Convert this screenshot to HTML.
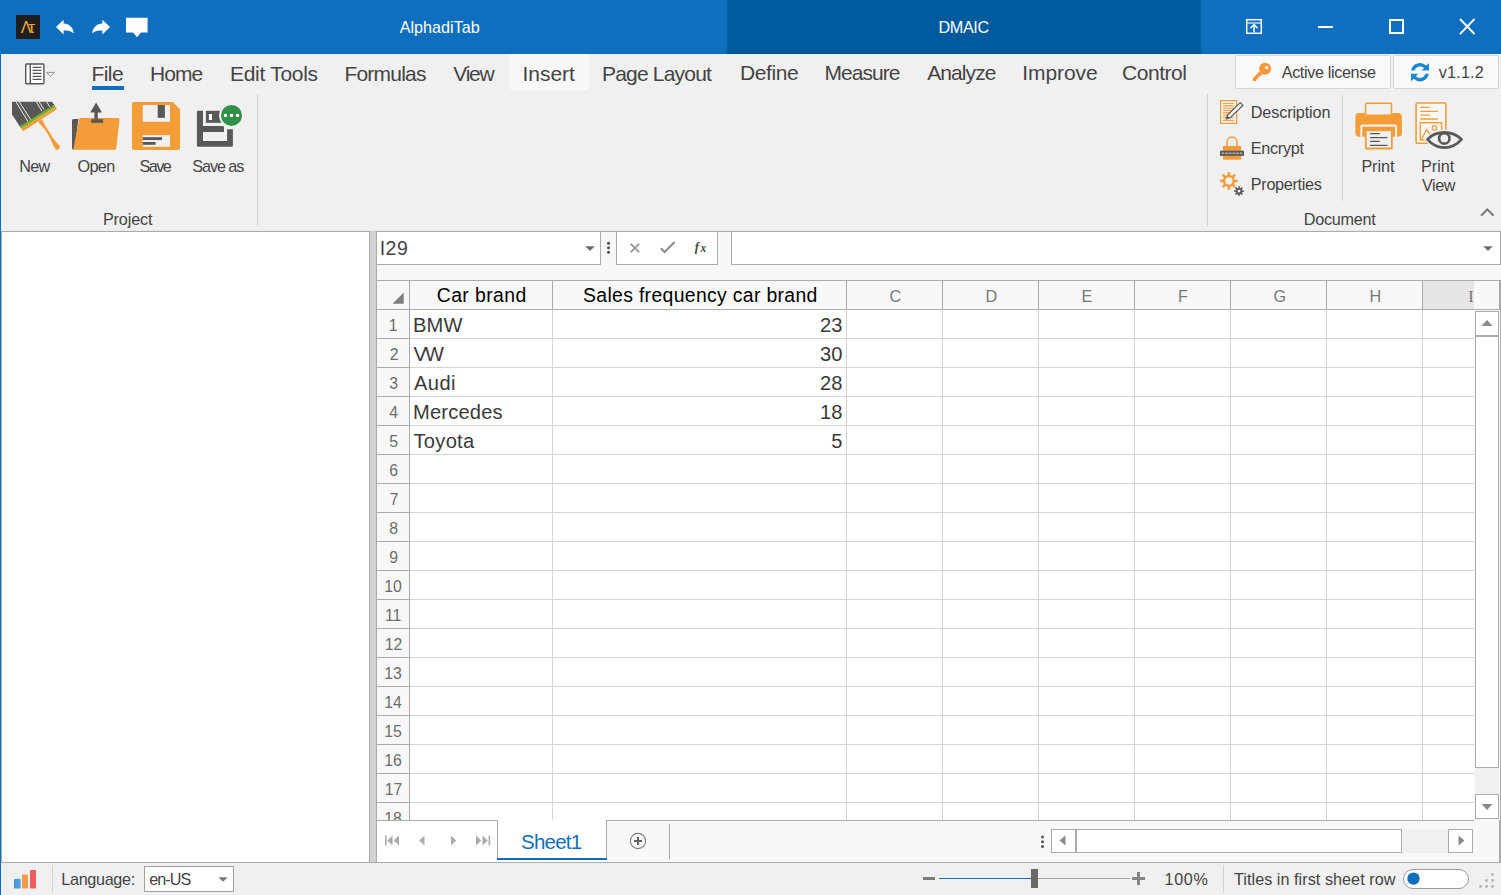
<!DOCTYPE html>
<html lang="en">
<head>
<meta charset="utf-8">
<title>AlphadiTab - DMAIC</title>
<style>
html,body{margin:0;padding:0;}
body{width:1501px;height:895px;overflow:hidden;position:relative;background:#f0f0f0;font-family:"Liberation Sans",sans-serif;}
.a{position:absolute;box-sizing:border-box;}
.t{position:absolute;white-space:pre;display:block;}
svg{position:absolute;overflow:visible;}
.box{position:absolute;box-sizing:border-box;background:#fff;border:1px solid #ababab;}
.hl{position:absolute;height:1px;background:#d4d4d4;}
.vl{position:absolute;width:1px;background:#d4d4d4;}
</style>
</head>
<body>
<!-- ===== title bar ===== -->
<div class="a" id="titlebar" style="left:0;top:0;width:1501px;height:54px;background:#106ebe;"></div>
<div class="a" id="titledark" style="left:727px;top:0;width:474px;height:54px;background:#005a9e;"></div>
<div class="a" id="winborder" style="left:0;top:54px;width:1px;height:841px;background:#106ebe;"></div>
<div class="a" style="left:16px;top:15px;width:24px;height:24px;background:#1e1e1e;"></div>
<svg style="left:56px;top:20px" width="18" height="15" viewBox="0 0 18 15"><path d="M0 7.1L7.6 -0.3V3.4C13 3.4 17 7 17.9 13.6C15.5 10.7 12 10.4 7.6 10.4V14.4Z" fill="#fff"/></svg>
<svg style="left:92px;top:20px" width="18" height="15" viewBox="0 0 18 15"><path d="M0 7.1L7.6 -0.3V3.4C13 3.4 17 7 17.9 13.6C15.5 10.7 12 10.4 7.6 10.4V14.4Z" fill="#fff" transform="translate(18,0) scale(-1,1)"/></svg>
<svg style="left:126px;top:17px" width="22" height="21" viewBox="0 0 22 21"><path d="M0 0.7H21.6V15.6H15L11 20.3L7 15.6H0Z" fill="#fff"/></svg>
<svg style="left:1245px;top:18px" width="18" height="17" viewBox="0 0 18 17"><g fill="none" stroke="#fff"><rect x="1.7" y="1.7" width="14.6" height="13.6" stroke-width="1.5"/><path d="M2 5H16" stroke-width="1.1"/><path d="M9 14.5V7M5.4 10.2L9 6.6L12.6 10.2" stroke-width="1.5"/></g></svg>
<div class="a" style="left:1318px;top:26px;width:15px;height:2px;background:#fff;"></div>
<div class="a" style="left:1389px;top:19px;width:15px;height:15px;border:2px solid #fff;"></div>
<svg style="left:1459px;top:18px" width="17" height="17" viewBox="0 0 17 17"><path d="M1 1L15.5 16M15.5 1L1 16" stroke="#fff" stroke-width="1.8" fill="none"/></svg>

<!-- ===== ribbon ===== -->
<div class="a" id="tabhover" style="left:510px;top:54px;width:79px;height:36px;background:#f8f8f8;"></div>
<div class="a" id="fileline" style="left:92px;top:86px;width:32px;height:4px;background:#106ebe;"></div>
<div class="a" style="left:257px;top:94px;width:1px;height:132px;background:#d2d2d2;"></div>
<div class="a" style="left:1207px;top:94px;width:1px;height:132px;background:#d2d2d2;"></div>
<div class="a" style="left:1342px;top:95px;width:1px;height:106px;background:#d2d2d2;"></div>
<div class="a" id="btnlic" style="left:1235px;top:55px;width:156px;height:34px;background:#f9f9f9;border:1px solid #d6d6d6;border-radius:2px;"></div>
<div class="a" id="btnver" style="left:1393px;top:55px;width:106px;height:34px;background:#f9f9f9;border:1px solid #d6d6d6;border-radius:2px;"></div>
<svg style="left:24px;top:62px" width="32" height="24" viewBox="0 0 32 24"><rect x="1.7" y="2" width="18.2" height="19.7" rx="1" fill="#fff" stroke="#555" stroke-width="1.4"/><path d="M6.3 2V21.7" stroke="#555" stroke-width="1.4"/><path d="M8.6 5.3H17.4M8.6 8.3H17.4M8.6 11.3H17.4M8.6 14.3H17.4M8.6 17.3H17.4" stroke="#555" stroke-width="1.3"/><path d="M22.6 10.4H30.4L26.5 14.5Z" fill="none" stroke="#8a8a8a" stroke-width="0.9"/></svg>
<svg style="left:12px;top:102px" width="48" height="48" viewBox="0 0 48 48"><path d="M0 -0.2H40L42.4 3L8 24.8L0 12.4Z" fill="#595856"/><path d="M4 -0.2L16 19.6M7.2 -0.2L18.8 17.8M24.4 -0.2L30 9.2M27.2 -0.2L32 7.6M34.8 -0.2L37.6 4.8" stroke="#fff" stroke-width="0.9" fill="none"/><path d="M7.8 24.6L42.4 2.8L43.6 4.8L9.2 26.8Z" fill="#6bb324"/><path d="M9.2 26.8L43.8 4.8L44.8 7.2L11.2 29.2Z" fill="#f39c38"/><path d="M26 19.8L30 17.2C32 22 35.5 27 38 31C40 35 43 39 46.9 42.9A2.7 2.7 0 0 1 43.3 47C40.5 42 38.5 37 36.2 32.6C33.5 28 30 24 26 19.8Z" fill="#f39c38"/></svg>
<svg style="left:72px;top:102px" width="48" height="48" viewBox="0 0 48 48"><path d="M1.5 17H6.5L2.5 47.5H1.5A1.5 1.5 0 0 1 0 46V18.5A1.5 1.5 0 0 1 1.5 17Z" fill="#595856"/><path d="M7.5 16H46A1.5 1.5 0 0 1 47.5 17.8L44.3 46.3A1.6 1.6 0 0 1 42.7 47.7H3A1.5 1.5 0 0 1 1.5 46Z" fill="#f39c38"/><path d="M19.1 17.2H31.1V20.8H19.1Z" fill="#595856"/><path d="M22.4 17.3V10.6H18.2L24.1 0.4L30 10.6H25.8V17.3Z" fill="#595856"/></svg>
<svg style="left:132px;top:102px" width="48" height="48" viewBox="0 0 48 48"><path d="M2 0H40.8L48 7.2V46A2 2 0 0 1 46 48H2A2 2 0 0 1 0 46V2A2 2 0 0 1 2 0Z" fill="#f39c38"/><rect x="10.8" y="3" width="27.2" height="16.8" fill="#f0f0f0"/><rect x="25.7" y="3" width="7.2" height="12.8" fill="#595856"/><rect x="10.8" y="33.2" width="27.2" height="11.6" fill="#f0f0f0"/><rect x="10.8" y="35.2" width="19.2" height="2.8" fill="#595856"/><rect x="10.8" y="40" width="12.8" height="2.8" fill="#595856"/></svg>
<svg style="left:196px;top:102px" width="48" height="48" viewBox="0 0 48 48"><path d="M2 8.8H7V39H31.1V27.2H36.9V43.6A1.2 1.2 0 0 1 35.7 44.8H2.1A1.2 1.2 0 0 1 0.9 43.6V10A1.2 1.2 0 0 1 2 8.8Z" fill="#595856"/><path d="M7 24H26.8A1.2 1.2 0 0 1 28 25.2V30H7Z" fill="#595856"/><rect x="9.9" y="8.8" width="16" height="12" fill="#595856"/><rect x="12.9" y="12" width="3.1" height="6" fill="#fff"/><circle cx="35.5" cy="13.4" r="12.4" fill="#f0f0f0"/><circle cx="35.5" cy="13.4" r="10.5" fill="#2f9046"/><rect x="27.9" y="12" width="3.1" height="3" fill="#fff"/><rect x="34" y="12" width="3.1" height="3" fill="#fff"/><rect x="40" y="12" width="3.1" height="3" fill="#fff"/></svg>
<svg style="left:1252px;top:62px" width="20" height="20" viewBox="0 0 20 20"><path d="M7.6 9.6L0.8 16.2V19H4V17.2H6V15.4L10.8 12.6Z" fill="#fb9738"/><circle cx="13.1" cy="6.8" r="6" fill="#fb9738"/><circle cx="14.6" cy="5.6" r="1.7" fill="#f9f9f9"/></svg>
<svg style="left:1411px;top:63px" width="18" height="18" viewBox="0 0 18 18"><path d="M0.1 7.6A9 9 0 0 1 15.3 2.6L18 0.2V7.6H10.8L13.1 5.1A5.7 5.7 0 0 0 3.6 7.6Z" fill="#1b87d0"/><path d="M0.1 7.6A9 9 0 0 1 15.3 2.6L18 0.2V7.6H10.8L13.1 5.1A5.7 5.7 0 0 0 3.6 7.6Z" fill="#1b87d0" transform="rotate(180 9 9.2)"/></svg>
<svg style="left:1220px;top:100px" width="24" height="24" viewBox="0 0 24 24"><rect x="0.6" y="0.6" width="16" height="22.8" fill="#f0f0f0" stroke="#f39c38" stroke-width="1.2"/><path d="M3 3.5H13.8M3 5.9H13.8M3 8.2H13.8M3 10.5H13.8M3 12.9H13.8M3 15.2H13.8M3 17.5H13.8M3 20.4H13.8" stroke="#f39c38" stroke-width="1.1" fill="none"/><path d="M20.3 2.6L23 5.3L10.2 17.6L6.2 18.9L7.6 15Z" fill="#fff" stroke="#595856" stroke-width="1.2" stroke-linejoin="round"/><path d="M6.2 18.9L7.4 15.6L9.6 17.8Z" fill="#595856"/></svg>
<svg style="left:1220px;top:136px" width="24" height="24" viewBox="0 0 24 24"><path d="M7.2 10.5V5.8A4.8 4.8 0 0 1 16.8 5.8V10.5" fill="none" stroke="#f39c38" stroke-width="1.5"/><rect x="3" y="10" width="18.1" height="13.7" fill="#f39c38"/><rect x="0" y="14.7" width="24" height="5.2" fill="#595856"/><path d="M2 16.3L4 18.3M4 16.3L2 18.3M1.7 17.3H4.3M5.6 16.3L7.6 18.3M7.6 16.3L5.6 18.3M5.3 17.3H7.8999999999999995M9.2 16.3L11.2 18.3M11.2 16.3L9.2 18.3M8.899999999999999 17.3H11.5M12.8 16.3L14.8 18.3M14.8 16.3L12.8 18.3M12.5 17.3H15.100000000000001M16.4 16.3L18.4 18.3M18.4 16.3L16.4 18.3M16.099999999999998 17.3H18.7M20 16.3L22 18.3M22 16.3L20 18.3M19.7 17.3H22.3" stroke="#cfcfcf" stroke-width="0.6" fill="none"/></svg>
<svg style="left:1220px;top:172px" width="24" height="24" viewBox="0 0 24 24"><g fill="#f39c38"><rect x="7.65" y="0.10" width="2.5" height="4.80" transform="rotate(0.0 8.9 8.9)"/><rect x="7.65" y="0.10" width="2.5" height="4.80" transform="rotate(45.0 8.9 8.9)"/><rect x="7.65" y="0.10" width="2.5" height="4.80" transform="rotate(90.0 8.9 8.9)"/><rect x="7.65" y="0.10" width="2.5" height="4.80" transform="rotate(135.0 8.9 8.9)"/><rect x="7.65" y="0.10" width="2.5" height="4.80" transform="rotate(180.0 8.9 8.9)"/><rect x="7.65" y="0.10" width="2.5" height="4.80" transform="rotate(225.0 8.9 8.9)"/><rect x="7.65" y="0.10" width="2.5" height="4.80" transform="rotate(270.0 8.9 8.9)"/><rect x="7.65" y="0.10" width="2.5" height="4.80" transform="rotate(315.0 8.9 8.9)"/><circle cx="8.9" cy="8.9" r="4.90" fill="none" stroke="#f39c38" stroke-width="2.40"/></g><g fill="#595856"><rect x="18.25" y="14.20" width="1.5" height="3.10" transform="rotate(0.0 19 19.1)"/><rect x="18.25" y="14.20" width="1.5" height="3.10" transform="rotate(45.0 19 19.1)"/><rect x="18.25" y="14.20" width="1.5" height="3.10" transform="rotate(90.0 19 19.1)"/><rect x="18.25" y="14.20" width="1.5" height="3.10" transform="rotate(135.0 19 19.1)"/><rect x="18.25" y="14.20" width="1.5" height="3.10" transform="rotate(180.0 19 19.1)"/><rect x="18.25" y="14.20" width="1.5" height="3.10" transform="rotate(225.0 19 19.1)"/><rect x="18.25" y="14.20" width="1.5" height="3.10" transform="rotate(270.0 19 19.1)"/><rect x="18.25" y="14.20" width="1.5" height="3.10" transform="rotate(315.0 19 19.1)"/><circle cx="19" cy="19.1" r="2.45" fill="none" stroke="#595856" stroke-width="1.90"/></g></svg>
<svg style="left:1355px;top:102px" width="48" height="48" viewBox="0 0 48 48"><rect x="10.6" y="1.2" width="25.9" height="12" rx="0.8" fill="#f0f0f0" stroke="#f39c38" stroke-width="1.5"/><path d="M4.4 10.9H9.9V13.8H37.2V10.9H42.9A4 4 0 0 1 46.9 14.9V30.7A4 4 0 0 1 42.9 34.7H42.1V24.6A2 2 0 0 0 40.1 22.6H7.3A2 2 0 0 0 5.3 24.6V34.7H4.4A4 4 0 0 1 0.4 30.7V14.9A4 4 0 0 1 4.4 10.9Z" fill="#f39c38"/><rect x="7.3" y="24.7" width="32.8" height="10" fill="#f39c38"/><rect x="10.8" y="28.4" width="26.1" height="18.1" rx="0.8" fill="#f0f0f0" stroke="#f39c38" stroke-width="1.8"/><path d="M15.1 31.7H24.8M15.1 35.6H32.4M15.1 39.3H24.8M15.1 43.4H32.4" stroke="#595856" stroke-width="1.3" fill="none"/></svg>
<svg style="left:1415px;top:102px" width="50" height="48" viewBox="0 0 50 48"><rect x="1.1" y="1" width="29.8" height="40.3" rx="1.2" fill="#f8f8f8" stroke="#f39c38" stroke-width="1.6"/><path d="M5.3 5.4H15M5.3 9.4H22.8M5.3 13.1H15M5.3 17H22.8" stroke="#f39c38" stroke-width="1.3" fill="none"/><rect x="5.3" y="20.7" width="21.3" height="17.2" fill="none" stroke="#f39c38" stroke-width="1.4"/><circle cx="19.5" cy="25.9" r="2.3" fill="none" stroke="#f39c38" stroke-width="1.2"/><path d="M6.6 37.3L11.5 27.5L16.4 34.4" fill="none" stroke="#f39c38" stroke-width="1.3"/><path d="M12.4 37.3C17 32.5 23 30.4 29.5 30.4C36 30.4 42 33 46.6 37.3C42 42.5 36 45.6 29.5 45.6C23 45.6 17 42.5 12.4 37.3Z" fill="#f0f0f0" stroke="#f0f0f0" stroke-width="5.5" stroke-linejoin="round"/><path d="M12.4 37.3C17 32.5 23 30.4 29.5 30.4C36 30.4 42 33 46.6 37.3C42 42.5 36 45.6 29.5 45.6C23 45.6 17 42.5 12.4 37.3Z" fill="#f0f0f0" stroke="#595856" stroke-width="2.6" stroke-linejoin="round"/><circle cx="29.3" cy="36.4" r="5.2" fill="#f0f0f0" stroke="#595856" stroke-width="2.6"/></svg>
<svg style="left:1480px;top:207px" width="15" height="10" viewBox="0 0 15 10"><path d="M1 8.8L7.3 2.4L13.6 8.8" fill="none" stroke="#7a7a7a" stroke-width="2"/></svg>

<!-- ===== body separator line ===== -->
<div class="a" style="left:1px;top:230px;width:1500px;height:1px;background:#e9e9e9;"></div>
<div class="a" style="left:1px;top:231px;width:1500px;height:1px;background:#ababab;"></div>
<!-- left panel -->
<div class="a" id="leftpanel" style="left:1px;top:232px;width:368px;height:630px;background:#fff;"></div>
<div class="a" style="left:369px;top:231px;width:1px;height:632px;background:#ababab;"></div>
<div class="a" style="left:1px;top:231px;width:1px;height:632px;background:#ababab;"></div>
<div class="a" id="splitter" style="left:370px;top:231px;width:6px;height:632px;background:#d2d2d2;"></div>
<!-- spreadsheet background -->
<div class="a" id="sheetbg" style="left:376px;top:232px;width:1125px;height:631px;background:#f8f8f8;"></div>
<div class="a" style="left:376px;top:231px;width:1px;height:632px;background:#ababab;"></div>
<div class="a" style="left:1499px;top:280px;width:2px;height:583px;background:#ababab;"></div>
<!-- formula bar -->
<div class="box" id="namebox" style="left:376px;top:231px;width:225px;height:34px;"></div>
<div class="box" id="fxbtns" style="left:616px;top:231px;width:102px;height:34px;"></div>
<div class="box" id="fxinput" style="left:731px;top:231px;width:770px;height:34px;"></div>
<svg style="left:585px;top:246px" width="10" height="5" viewBox="0 0 10 5"><path d="M0.2 0.2H9.8L5 4.9Z" fill="#6e6e6e"/></svg>
<svg style="left:606px;top:241px" width="5" height="14" viewBox="0 0 5 14"><g fill="#4a4a4a"><circle cx="2.5" cy="2.2" r="1.5"/><circle cx="2.5" cy="6.7" r="1.5"/><circle cx="2.5" cy="11.2" r="1.5"/></g></svg>
<svg style="left:630px;top:243px" width="10" height="10" viewBox="0 0 10 10"><path d="M0.6 0.6L9.2 9.4M9.2 0.6L0.6 9.4" stroke="#9a9a9a" stroke-width="1.8" fill="none"/></svg>
<svg style="left:660px;top:241px" width="16" height="13" viewBox="0 0 16 13"><path d="M0.8 7.2L4.6 11L14.6 1" stroke="#8c8c8c" stroke-width="2.1" fill="none"/></svg>
<svg style="left:1483px;top:246px" width="10" height="5" viewBox="0 0 10 5"><path d="M0.2 0.2H9.8L5 4.9Z" fill="#6e6e6e"/></svg>

<!-- grid -->
<div class="a" id="gridwhite" style="left:410px;top:310px;width:1064px;height:510px;background:#fff;"></div>
<div class="a" id="hdrsel" style="left:1423px;top:281px;width:51px;height:28px;background:#e6e6e6;"></div>
<div class="a" style="left:410px;top:338px;width:1064px;height:1px;background:#d4d4d4;"></div>
<div class="a" style="left:377px;top:338px;width:32px;height:1px;background:#ababab;"></div>
<div class="a" style="left:410px;top:367px;width:1064px;height:1px;background:#d4d4d4;"></div>
<div class="a" style="left:377px;top:367px;width:32px;height:1px;background:#ababab;"></div>
<div class="a" style="left:410px;top:396px;width:1064px;height:1px;background:#d4d4d4;"></div>
<div class="a" style="left:377px;top:396px;width:32px;height:1px;background:#ababab;"></div>
<div class="a" style="left:410px;top:425px;width:1064px;height:1px;background:#d4d4d4;"></div>
<div class="a" style="left:377px;top:425px;width:32px;height:1px;background:#ababab;"></div>
<div class="a" style="left:410px;top:454px;width:1064px;height:1px;background:#d4d4d4;"></div>
<div class="a" style="left:377px;top:454px;width:32px;height:1px;background:#ababab;"></div>
<div class="a" style="left:410px;top:483px;width:1064px;height:1px;background:#d4d4d4;"></div>
<div class="a" style="left:377px;top:483px;width:32px;height:1px;background:#ababab;"></div>
<div class="a" style="left:410px;top:512px;width:1064px;height:1px;background:#d4d4d4;"></div>
<div class="a" style="left:377px;top:512px;width:32px;height:1px;background:#ababab;"></div>
<div class="a" style="left:410px;top:541px;width:1064px;height:1px;background:#d4d4d4;"></div>
<div class="a" style="left:377px;top:541px;width:32px;height:1px;background:#ababab;"></div>
<div class="a" style="left:410px;top:570px;width:1064px;height:1px;background:#d4d4d4;"></div>
<div class="a" style="left:377px;top:570px;width:32px;height:1px;background:#ababab;"></div>
<div class="a" style="left:410px;top:599px;width:1064px;height:1px;background:#d4d4d4;"></div>
<div class="a" style="left:377px;top:599px;width:32px;height:1px;background:#ababab;"></div>
<div class="a" style="left:410px;top:628px;width:1064px;height:1px;background:#d4d4d4;"></div>
<div class="a" style="left:377px;top:628px;width:32px;height:1px;background:#ababab;"></div>
<div class="a" style="left:410px;top:657px;width:1064px;height:1px;background:#d4d4d4;"></div>
<div class="a" style="left:377px;top:657px;width:32px;height:1px;background:#ababab;"></div>
<div class="a" style="left:410px;top:686px;width:1064px;height:1px;background:#d4d4d4;"></div>
<div class="a" style="left:377px;top:686px;width:32px;height:1px;background:#ababab;"></div>
<div class="a" style="left:410px;top:715px;width:1064px;height:1px;background:#d4d4d4;"></div>
<div class="a" style="left:377px;top:715px;width:32px;height:1px;background:#ababab;"></div>
<div class="a" style="left:410px;top:744px;width:1064px;height:1px;background:#d4d4d4;"></div>
<div class="a" style="left:377px;top:744px;width:32px;height:1px;background:#ababab;"></div>
<div class="a" style="left:410px;top:773px;width:1064px;height:1px;background:#d4d4d4;"></div>
<div class="a" style="left:377px;top:773px;width:32px;height:1px;background:#ababab;"></div>
<div class="a" style="left:410px;top:802px;width:1064px;height:1px;background:#d4d4d4;"></div>
<div class="a" style="left:377px;top:802px;width:32px;height:1px;background:#ababab;"></div>
<div class="a" style="left:552px;top:310px;width:1px;height:510px;background:#d4d4d4;"></div>
<div class="a" style="left:552px;top:281px;width:1px;height:28px;background:#ababab;"></div>
<div class="a" style="left:846px;top:310px;width:1px;height:510px;background:#d4d4d4;"></div>
<div class="a" style="left:846px;top:281px;width:1px;height:28px;background:#ababab;"></div>
<div class="a" style="left:942px;top:310px;width:1px;height:510px;background:#d4d4d4;"></div>
<div class="a" style="left:942px;top:281px;width:1px;height:28px;background:#ababab;"></div>
<div class="a" style="left:1038px;top:310px;width:1px;height:510px;background:#d4d4d4;"></div>
<div class="a" style="left:1038px;top:281px;width:1px;height:28px;background:#ababab;"></div>
<div class="a" style="left:1134px;top:310px;width:1px;height:510px;background:#d4d4d4;"></div>
<div class="a" style="left:1134px;top:281px;width:1px;height:28px;background:#ababab;"></div>
<div class="a" style="left:1230px;top:310px;width:1px;height:510px;background:#d4d4d4;"></div>
<div class="a" style="left:1230px;top:281px;width:1px;height:28px;background:#ababab;"></div>
<div class="a" style="left:1326px;top:310px;width:1px;height:510px;background:#d4d4d4;"></div>
<div class="a" style="left:1326px;top:281px;width:1px;height:28px;background:#ababab;"></div>
<div class="a" style="left:1422px;top:310px;width:1px;height:510px;background:#d4d4d4;"></div>
<div class="a" style="left:1422px;top:281px;width:1px;height:28px;background:#ababab;"></div>
<div class="a" style="left:376px;top:280px;width:1124px;height:1px;background:#ababab;"></div>
<div class="a" style="left:377px;top:309px;width:1123px;height:1px;background:#ababab;"></div>
<div class="a" style="left:409px;top:281px;width:1px;height:539px;background:#ababab;"></div>
<div class="a" style="left:1499px;top:281px;width:1px;height:29px;background:#ababab;"></div>
<svg style="left:392px;top:292px" width="12" height="12" viewBox="0 0 12 12"><path d="M11.7 0.6V11.7H0.6Z" fill="#7f7f7f"/></svg>
<div class="a" style="left:1474px;top:310px;width:26px;height:510px;background:#f8f8f8;"></div>
<div class="a" style="left:1475px;top:336px;width:24px;height:458px;background:#f0f0f0;"></div>
<div class="box" style="left:1475px;top:311px;width:24px;height:25px;"></div>
<div class="box" style="left:1475px;top:336px;width:24px;height:432px;"></div>
<div class="box" style="left:1475px;top:794px;width:24px;height:25px;"></div>
<svg style="left:1481px;top:319px" width="12" height="8" viewBox="0 0 12 8"><path d="M0.5 7L6 1L11.5 7Z" fill="#8a8a8a"/></svg>
<svg style="left:1481px;top:803px" width="12" height="8" viewBox="0 0 12 8"><path d="M0.5 1L6 7L11.5 1Z" fill="#8a8a8a"/></svg>
<span class="t" style="left:388.70px;top:317px;font-size:15.8px;line-height:17px;color:#6c6c6c;">1</span>
<span class="t" style="left:389.70px;top:346px;font-size:15.8px;line-height:17px;color:#6c6c6c;">2</span>
<span class="t" style="left:389.20px;top:375px;font-size:15.8px;line-height:17px;color:#6c6c6c;">3</span>
<span class="t" style="left:389.20px;top:404px;font-size:15.8px;line-height:17px;color:#6c6c6c;">4</span>
<span class="t" style="left:389.20px;top:433px;font-size:15.8px;line-height:17px;color:#6c6c6c;">5</span>
<span class="t" style="left:389.20px;top:462px;font-size:15.8px;line-height:17px;color:#6c6c6c;">6</span>
<span class="t" style="left:389.70px;top:491px;font-size:15.8px;line-height:17px;color:#6c6c6c;">7</span>
<span class="t" style="left:389.20px;top:520px;font-size:15.8px;line-height:17px;color:#6c6c6c;">8</span>
<span class="t" style="left:389.20px;top:549px;font-size:15.8px;line-height:17px;color:#6c6c6c;">9</span>
<span class="t" style="left:384.31px;top:578px;font-size:15.8px;line-height:17px;color:#6c6c6c;">10</span>
<span class="t" style="left:384.89px;top:607px;font-size:15.8px;line-height:17px;color:#6c6c6c;">11</span>
<span class="t" style="left:384.81px;top:636px;font-size:15.8px;line-height:17px;color:#6c6c6c;">12</span>
<span class="t" style="left:384.31px;top:665px;font-size:15.8px;line-height:17px;color:#6c6c6c;">13</span>
<span class="t" style="left:384.31px;top:694px;font-size:15.8px;line-height:17px;color:#6c6c6c;">14</span>
<span class="t" style="left:384.31px;top:723px;font-size:15.8px;line-height:17px;color:#6c6c6c;">15</span>
<span class="t" style="left:384.31px;top:752px;font-size:15.8px;line-height:17px;color:#6c6c6c;">16</span>
<span class="t" style="left:384.81px;top:781px;font-size:15.8px;line-height:17px;color:#6c6c6c;">17</span>
<span class="t" style="left:384.31px;top:810px;font-size:15.8px;line-height:17px;color:#6c6c6c;">18</span>

<!-- tab bar -->
<div class="a" style="left:377px;top:821px;width:1122px;height:41px;background:#f8f8f8;"></div>
<div class="a" style="left:376px;top:820px;width:1098px;height:1px;background:#ababab;"></div>
<div class="a" style="left:377px;top:821px;width:120px;height:41px;background:#fff;"></div>
<div class="a" style="left:498px;top:820px;width:108px;height:42px;background:#fff;"></div>
<div class="a" style="left:497px;top:820px;width:1px;height:38px;background:#ababab;"></div>
<div class="a" style="left:606px;top:820px;width:1px;height:38px;background:#ababab;"></div>
<div class="a" style="left:497px;top:858px;width:110px;height:2px;background:#106ebe;"></div>
<div class="a" style="left:669px;top:824px;width:1px;height:35px;background:#a6a6a6;"></div>
<svg style="left:384px;top:835px" width="110" height="11" viewBox="0 0 110 11"><g fill="#ababab"><rect x="1" y="0.5" width="1.6" height="10"/><path d="M8.5 0.5V10.5L3.2 5.5Z"/><path d="M15 0.5V10.5L9.7 5.5Z"/><path d="M40.5 0.5V10.5L35.2 5.5Z"/><path d="M67 0.5V10.5L72.3 5.5Z"/><path d="M92 0.5V10.5L97.3 5.5Z"/><path d="M98.5 0.5V10.5L103.8 5.5Z"/><rect x="104.6" y="0.5" width="1.6" height="10"/></g></svg>
<svg style="left:629px;top:832px" width="18" height="18" viewBox="0 0 18 18"><circle cx="9" cy="9" r="7.6" fill="none" stroke="#7c7c7c" stroke-width="1.1"/><path d="M9 5v8M5 9h8" stroke="#606060" stroke-width="2"/></svg>
<svg style="left:1040px;top:835px" width="5" height="14" viewBox="0 0 5 14"><g fill="#555"><circle cx="2.5" cy="2" r="1.5"/><circle cx="2.5" cy="6.7" r="1.5"/><circle cx="2.5" cy="11.4" r="1.5"/></g></svg>
<div class="a" style="left:1051px;top:829px;width:422px;height:24px;background:#f0f0f0;"></div>
<div class="box" style="left:1051px;top:829px;width:25px;height:24px;"></div>
<div class="box" style="left:1076px;top:829px;width:326px;height:24px;"></div>
<div class="box" style="left:1448px;top:829px;width:25px;height:24px;"></div>
<svg style="left:1059px;top:835px" width="7" height="11" viewBox="0 0 7 11"><path d="M6.5 0.5V10.5L0.5 5.5Z" fill="#8a8a8a"/></svg>
<svg style="left:1458px;top:835px" width="7" height="11" viewBox="0 0 7 11"><path d="M0.5 0.5V10.5L6.5 5.5Z" fill="#8a8a8a"/></svg>

<!-- status bar -->
<div class="a" style="left:1px;top:862px;width:1500px;height:1px;background:#ababab;"></div>
<div class="a" id="status" style="left:1px;top:863px;width:1500px;height:32px;background:#f0f0f0;"></div>
<svg style="left:13px;top:868px" width="24" height="22" viewBox="0 0 24 22"><rect x="1" y="11" width="6.5" height="9.5" rx="1" fill="#3c97d9"/><rect x="2.5" y="10.5" width="5" height="9" rx="1" fill="#5aa9e2" opacity=".6"/><rect x="9" y="6.5" width="6" height="14" rx="1" fill="#f39a4a"/><rect x="17" y="2" width="6" height="18.5" rx="1" fill="#ec5f5b"/></svg>
<div class="a" style="left:52px;top:865px;width:1px;height:28px;background:#d2d2d2;"></div>
<div class="box" style="left:144px;top:866px;width:90px;height:26px;border-color:#a0a0a0"></div>
<svg style="left:218px;top:877px" width="10" height="5" viewBox="0 0 10 5"><path d="M0.3 0.2H9.7L5 4.8Z" fill="#7a7a7a"/></svg>
<div class="a" style="left:923px;top:877px;width:12px;height:3px;background:#7c7a78;"></div>
<div class="a" style="left:939px;top:878px;width:92px;height:1px;background:#106ebe;"></div>
<div class="a" style="left:1038px;top:878px;width:92px;height:1px;background:#a6a6a6;"></div>
<div class="a" style="left:1031px;top:869px;width:7px;height:19px;background:#6b6966;"></div>
<div class="a" style="left:1132px;top:877px;width:13px;height:3px;background:#858585;"></div>
<div class="a" style="left:1137px;top:872px;width:3px;height:13px;background:#858585;"></div>
<div class="a" style="left:1223px;top:865px;width:1px;height:28px;background:#d2d2d2;"></div>
<div class="a" style="left:1403px;top:869px;width:66px;height:20px;background:#fff;border:1px solid #9a9a9a;border-radius:10px;"></div>
<svg style="left:1405px;top:870px" width="18" height="18" viewBox="0 0 18 18"><circle cx="8.5" cy="8.6" r="6.2" fill="#106ebe"/></svg>
<svg style="left:1478px;top:872px" width="18" height="18" viewBox="0 0 18 18"><g fill="#b4b4b4"><circle cx="14.5" cy="2.5" r="1.4"/><circle cx="8.5" cy="8.5" r="1.4"/><circle cx="14.5" cy="8.5" r="1.4"/><circle cx="2.5" cy="14.5" r="1.4"/><circle cx="8.5" cy="14.5" r="1.4"/><circle cx="14.5" cy="14.5" r="1.4"/></g></svg>

<!-- ===== texts ===== -->
<span class="t" style="left:399.70px;top:18px;font-size:16.2px;line-height:18px;color:#ffffff;letter-spacing:-0.011px;">AlphadiTab</span>
<span class="t" style="left:938.50px;top:18px;font-size:16.2px;line-height:18px;color:#ffffff;letter-spacing:-0.392px;">DMAIC</span>
<span class="t" style="left:20.70px;top:19px;font-size:16px;line-height:17px;color:#fba92f;letter-spacing:-2.787px;">Λτ</span>
<span class="t" style="left:91.40px;top:62px;font-size:21px;line-height:23px;color:#444444;letter-spacing:-0.520px;">File</span>
<span class="t" style="left:150.00px;top:62px;font-size:21px;line-height:23px;color:#444444;letter-spacing:-0.913px;">Home</span>
<span class="t" style="left:230.00px;top:62px;font-size:21px;line-height:23px;color:#444444;letter-spacing:-0.283px;">Edit Tools</span>
<span class="t" style="left:344.40px;top:62px;font-size:21px;line-height:23px;color:#444444;letter-spacing:-0.774px;">Formulas</span>
<span class="t" style="left:453.30px;top:62px;font-size:21px;line-height:23px;color:#444444;letter-spacing:-1.257px;">View</span>
<span class="t" style="left:522.50px;top:62px;font-size:21px;line-height:23px;color:#444444;letter-spacing:-0.037px;">Insert</span>
<span class="t" style="left:602.00px;top:62px;font-size:21px;line-height:23px;color:#444444;letter-spacing:-0.810px;">Page Layout</span>
<span class="t" style="left:740.00px;top:61px;font-size:21px;line-height:23px;color:#444444;letter-spacing:-0.405px;">Define</span>
<span class="t" style="left:824.50px;top:61px;font-size:21px;line-height:23px;color:#444444;letter-spacing:-0.954px;">Measure</span>
<span class="t" style="left:927.30px;top:61px;font-size:21px;line-height:23px;color:#444444;letter-spacing:-0.938px;">Analyze</span>
<span class="t" style="left:1022.20px;top:61px;font-size:21px;line-height:23px;color:#444444;letter-spacing:-0.063px;">Improve</span>
<span class="t" style="left:1122.00px;top:61px;font-size:21px;line-height:23px;color:#444444;letter-spacing:-0.455px;">Control</span>
<span class="t" style="left:19.30px;top:157px;font-size:16.2px;line-height:18px;color:#444444;letter-spacing:-0.696px;">New</span>
<span class="t" style="left:77.40px;top:157px;font-size:16.2px;line-height:18px;color:#444444;letter-spacing:-0.566px;">Open</span>
<span class="t" style="left:139.40px;top:157px;font-size:16.2px;line-height:18px;color:#444444;letter-spacing:-1.498px;">Save</span>
<span class="t" style="left:192.30px;top:157px;font-size:16.2px;line-height:18px;color:#444444;letter-spacing:-1.083px;">Save as</span>
<span class="t" style="left:102.90px;top:210px;font-size:16.2px;line-height:18px;color:#444444;letter-spacing:-0.131px;">Project</span>
<span class="t" style="left:1250.80px;top:103px;font-size:16.2px;line-height:18px;color:#444444;letter-spacing:-0.137px;">Description</span>
<span class="t" style="left:1250.80px;top:139px;font-size:16.2px;line-height:18px;color:#444444;letter-spacing:-0.297px;">Encrypt</span>
<span class="t" style="left:1250.80px;top:175px;font-size:16.2px;line-height:18px;color:#444444;letter-spacing:-0.298px;">Properties</span>
<span class="t" style="left:1361.40px;top:157px;font-size:16.2px;line-height:18px;color:#444444;letter-spacing:-0.072px;">Print</span>
<span class="t" style="left:1421.00px;top:157px;font-size:16.2px;line-height:18px;color:#444444;letter-spacing:-0.022px;">Print</span>
<span class="t" style="left:1422.00px;top:176px;font-size:16.2px;line-height:18px;color:#444444;letter-spacing:-0.434px;">View</span>
<span class="t" style="left:1303.80px;top:210px;font-size:16.2px;line-height:18px;color:#444444;letter-spacing:-0.254px;">Document</span>
<span class="t" style="left:1281.70px;top:63px;font-size:16.2px;line-height:18px;color:#444444;letter-spacing:-0.359px;">Active license</span>
<span class="t" style="left:1438.80px;top:63px;font-size:16.2px;line-height:18px;color:#444444;letter-spacing:0.181px;">v1.1.2</span>
<span class="t" style="left:379.70px;top:237px;font-size:19.5px;line-height:22px;color:#444444;letter-spacing:0.519px;">I29</span>
<span class="t" style="left:694.70px;top:240px;font-size:12.5px;line-height:14px;color:#444444;font-family:'Liberation Serif', serif;font-weight:bold;font-style:italic;">f<span style="font-size:11.5px;position:relative;top:1px;left:1.6px">x</span></span>
<span class="t" style="left:436.80px;top:284px;font-size:19.4px;line-height:22px;color:#000000;letter-spacing:0.395px;">Car brand</span>
<span class="t" style="left:583.00px;top:284px;font-size:19.4px;line-height:22px;color:#000000;letter-spacing:0.335px;">Sales frequency car brand</span>
<span class="t" style="left:889.50px;top:287px;font-size:16.2px;line-height:18px;color:#777777;">C</span>
<span class="t" style="left:985.50px;top:287px;font-size:16.2px;line-height:18px;color:#777777;">D</span>
<span class="t" style="left:1081.50px;top:287px;font-size:16.2px;line-height:18px;color:#777777;">E</span>
<span class="t" style="left:1178.00px;top:287px;font-size:16.2px;line-height:18px;color:#777777;">F</span>
<span class="t" style="left:1273.50px;top:287px;font-size:16.2px;line-height:18px;color:#777777;">G</span>
<span class="t" style="left:1369.50px;top:287px;font-size:16.2px;line-height:18px;color:#777777;">H</span>
<span class="t" style="left:1468.20px;top:288px;font-size:16.2px;line-height:18px;color:#777777;font-family:'Liberation Serif', serif;">I</span>
<span class="t" style="left:413.00px;top:314px;font-size:20.1px;line-height:22px;color:#3a3a3a;letter-spacing:0.180px;">BMW</span>
<span class="t" style="left:820.12px;top:314px;font-size:20.1px;line-height:22px;color:#3a3a3a;">23</span>
<span class="t" style="left:413.50px;top:343px;font-size:20.1px;line-height:22px;color:#3a3a3a;letter-spacing:-1.902px;">VW</span>
<span class="t" style="left:820.12px;top:343px;font-size:20.1px;line-height:22px;color:#3a3a3a;">30</span>
<span class="t" style="left:414.00px;top:372px;font-size:20.1px;line-height:22px;color:#3a3a3a;letter-spacing:0.416px;">Audi</span>
<span class="t" style="left:820.12px;top:372px;font-size:20.1px;line-height:22px;color:#3a3a3a;">28</span>
<span class="t" style="left:413.00px;top:401px;font-size:20.1px;line-height:22px;color:#3a3a3a;letter-spacing:0.189px;">Mercedes</span>
<span class="t" style="left:820.12px;top:401px;font-size:20.1px;line-height:22px;color:#3a3a3a;">18</span>
<span class="t" style="left:413.50px;top:430px;font-size:20.1px;line-height:22px;color:#3a3a3a;letter-spacing:0.295px;">Toyota</span>
<span class="t" style="left:831.30px;top:430px;font-size:20.1px;line-height:22px;color:#3a3a3a;">5</span>
<span class="t" style="left:521.00px;top:830px;font-size:20.5px;line-height:23px;color:#106ebe;letter-spacing:-0.774px;">Sheet1</span>
<span class="t" style="left:61.30px;top:870px;font-size:16.2px;line-height:18px;color:#444444;letter-spacing:-0.328px;">Language:</span>
<span class="t" style="left:149.20px;top:870px;font-size:16.2px;line-height:18px;color:#444444;letter-spacing:-0.947px;">en-US</span>
<span class="t" style="left:1164.50px;top:870px;font-size:16.2px;line-height:18px;color:#444444;letter-spacing:0.664px;">100%</span>
<span class="t" style="left:1234.00px;top:870px;font-size:16.2px;line-height:18px;color:#444444;letter-spacing:0.040px;">Titles in first sheet row</span>
</body>
</html>
